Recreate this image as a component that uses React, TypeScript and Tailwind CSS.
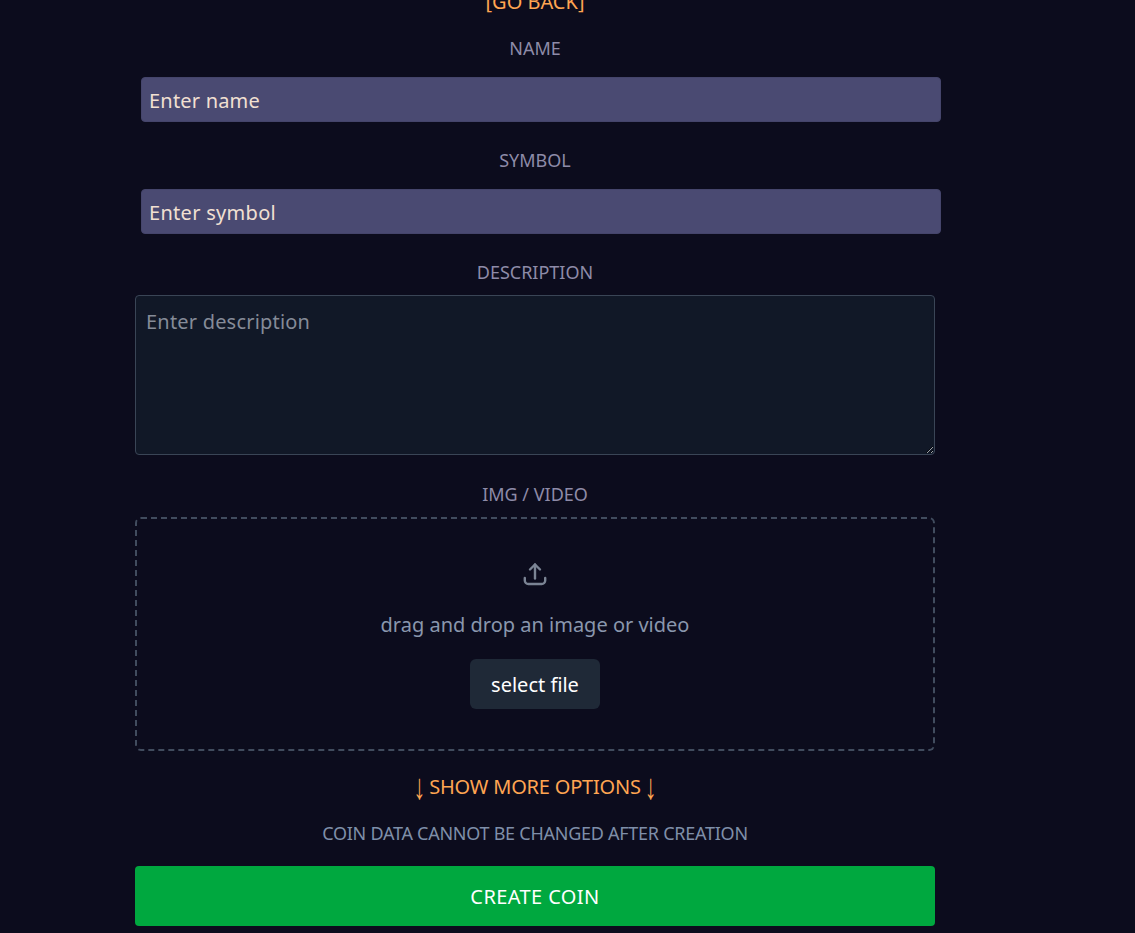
const font = { fontFamily: '"Noto Sans", sans-serif' };

function Label({ children, className }: { children: string; className: string }) {
  return <div className={"h-5 text-center text-[18px] leading-5 text-[#8e8ba8] " + className}>{children}</div>;
}

function Arrow() {
  return <span className="inline-block origin-center scale-y-[1.5] font-['Liberation_Sans'] text-[24px] leading-none">↓</span>;
}

export default function App() {
  return (
    <div className="h-[933px] overflow-hidden bg-[#0c0c1d]" style={font}>
      <div className="flex w-[1070px] flex-col items-center">
        <a className="-mt-[8px] h-5 text-[20px] leading-5 text-[#ffa552]">[GO BACK]</a>

        <Label className="mt-[26px] w-[800px]">NAME</Label>
        <input
          placeholder="Enter name"
          className="mt-[19px] ml-[12px] h-[45px] w-[800px] rounded border border-[#45456b] bg-[#4a4a72] px-[7px] pt-[2px] text-[20px] tracking-[0.2px] text-white outline-none placeholder:text-[#f2e0d2]"
        />

        <Label className="mt-[28px] w-[800px]">SYMBOL</Label>
        <input
          placeholder="Enter symbol"
          className="mt-[19px] ml-[12px] h-[45px] w-[800px] rounded border border-[#45456b] bg-[#4a4a72] px-[7px] pt-[2px] text-[20px] tracking-[0.3px] text-white outline-none placeholder:text-[#f2e0d2]"
        />

        <Label className="mt-[28px] w-[800px]">DESCRIPTION</Label>
        <textarea
          placeholder="Enter description"
          className="mt-[13px] block h-[160px] w-[800px] rounded border border-[#3a4556] bg-[#111827] px-[10px] py-[12px] text-[20px] leading-[28px] tracking-[0.2px] text-white outline-none placeholder:text-[#858b98]"
        />

        <Label className="mt-[29px] w-[800px]">IMG / VIDEO</Label>
        <div className="mt-[13px] flex h-[234px] w-[800px] flex-col items-center rounded-md border-2 border-dashed border-[#414c5e]">
          <svg
            width="24"
            height="24"
            viewBox="0 0 24 24"
            fill="none"
            stroke="#7b8494"
            strokeWidth="2.4"
            strokeLinecap="round"
            strokeLinejoin="round"
            className="mt-[43px]"
          >
            <path d="M1.8 16v2.5a3.5 3.5 0 0 0 3.5 3.5h13.4a3.5 3.5 0 0 0 3.5-3.5V16" />
            <path d="M12 16.5V2.5" />
            <path d="M7 7.5l5-5 5 5" />
          </svg>
          <div className="mt-[25px] h-7 text-[20px] leading-7 text-[#8a97ad]">drag and drop an image or video</div>
          <button className="mt-[20px] h-[50px] w-[130px] rounded-md bg-[#1f2937] pt-[2px] text-[20px] text-white">select file</button>
        </div>

        <div className="mt-[22px] flex h-7 items-center gap-[4px] text-[20px] leading-7 tracking-[-0.2px] text-[#ffa552]">
          <Arrow />
          <span>SHOW MORE OPTIONS</span>
          <Arrow />
        </div>
        <div className="mt-[22px] h-5 text-[18px] leading-5 tracking-[-0.26px] text-[#7f8fa9]">COIN DATA CANNOT BE CHANGED AFTER CREATION</div>
        <button className="mt-[23px] h-[60px] w-[800px] rounded bg-[#00a83f] pt-[2px] text-[20px] tracking-[0.4px] text-white">CREATE COIN</button>
      </div>
    </div>
  );
}
